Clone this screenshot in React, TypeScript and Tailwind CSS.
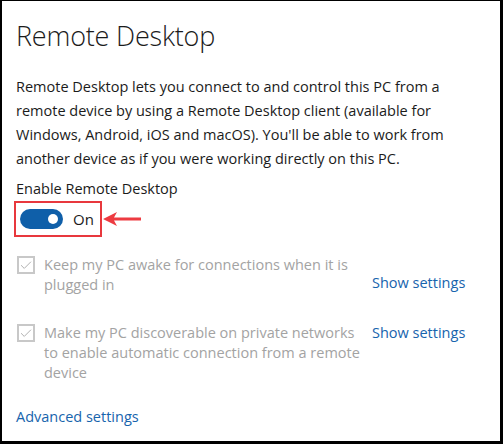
import { Check } from "lucide-react";

const font = { fontFamily: '"Open Sans", "Noto Sans", sans-serif' };

const Box = () => (
  <div className="w-[18px] h-[18px] mt-[1px] ml-[1px] border-2 border-[#c8c8c8] flex items-center justify-center shrink-0">
    <Check size={15} strokeWidth={1.6} color="#aaaaaa" />
  </div>
);

export default function App() {
  return (
    <div
      style={font}
      className="w-[503px] h-[444px] bg-white border-l-2 border-t border-r-[3px] border-b-[3px] border-black pl-[14px] text-[#1b1b1b] text-[14.5px]"
    >
      <h1 className="text-[27px] font-light leading-none pt-[21px] tracking-[-0.2px]">Remote Desktop</h1>

      <p className="mt-[26px] leading-[24px]">
        Remote Desktop lets you connect to and control this PC from a
        <br />
        remote device by using a Remote Desktop client (available for
        <br />
        Windows, Android, iOS and macOS). You'll be able to work from
        <br />
        another device as if you were working directly on this PC.
      </p>

      <div className="mt-[8px] leading-[20px]">Enable Remote Desktop</div>

      <div className="flex items-center mt-[2px]">
        <div className="w-[88px] h-[36px] border-2 border-[#e8383d] -ml-[2px] flex items-center pl-[4px]">
          <div className="w-[43px] h-[20px] rounded-full bg-[#0f5fa9] flex items-center justify-end pr-[5px]">
            <div className="w-[10px] h-[10px] rounded-full bg-white" />
          </div>
          <span className="ml-[10px] text-[15px]">On</span>
        </div>
        <svg width="42" height="16" viewBox="0 0 42 16" className="-ml-[1px]">
          <path d="M2 8 L16 1 L13 6.5 L40 6.5 L40 9.5 L13 9.5 L16 15 Z" fill="#ed3b41" />
        </svg>
      </div>

      <div className="flex mt-[18px]">
        <div className="w-[356px] flex">
          <Box />
          <div className="ml-[9px] text-[#a3a3a3] leading-[20px]">
            <div>Keep my PC awake for connections when it is</div>
            <div>plugged in</div>
          </div>
        </div>
        <div className="text-[#1764ad] leading-[20px] mt-[18px]">Show settings</div>
      </div>

      <div className="flex mt-[28px]">
        <div className="w-[356px] flex">
          <Box />
          <div className="ml-[9px] text-[#a3a3a3] leading-[20px]">
            <div>Make my PC discoverable on private networks</div>
            <div>to enable automatic connection from a remote</div>
            <div>device</div>
          </div>
        </div>
        <div className="text-[#1764ad] leading-[20px]">Show settings</div>
      </div>

      <div className="mt-[24px] text-[#1764ad] leading-[20px]">Advanced settings</div>
    </div>
  );
}
